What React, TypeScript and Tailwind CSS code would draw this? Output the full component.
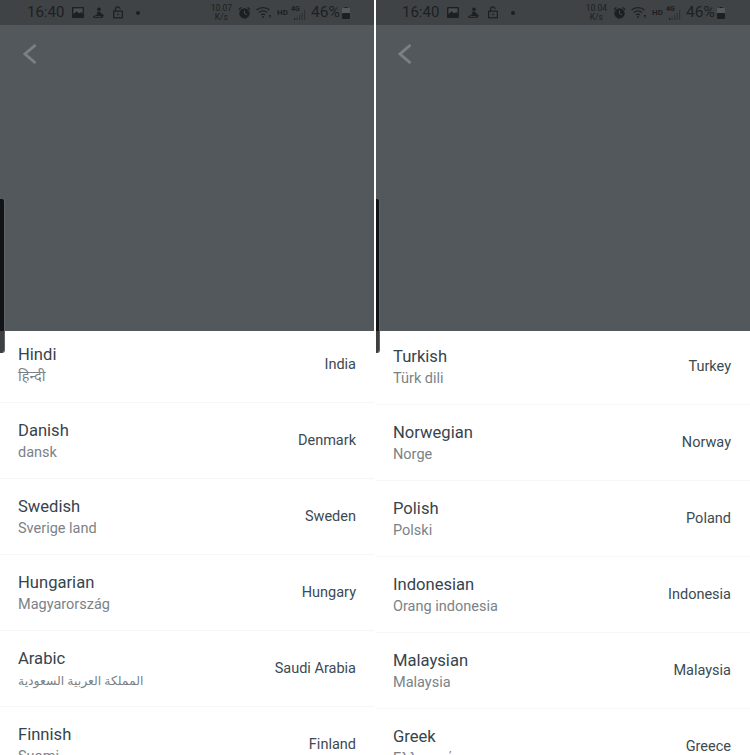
import React from 'react';

type Lang = { name: string; native: string; country: string; nativeClass?: string };

const leftLangs: Lang[] = [
  { name: 'Hindi', native: 'हिन्दी', country: 'India' },
  { name: 'Danish', native: 'dansk', country: 'Denmark' },
  { name: 'Swedish', native: 'Sverige land', country: 'Sweden' },
  { name: 'Hungarian', native: 'Magyarország', country: 'Hungary' },
  { name: 'Arabic', native: 'المملكة العربية السعودية', country: 'Saudi Arabia', nativeClass: 'text-[12.4px]' },
  { name: 'Finnish', native: 'Suomi', country: 'Finland' },
];

const rightLangs: Lang[] = [
  { name: 'Turkish', native: 'Türk dili', country: 'Turkey' },
  { name: 'Norwegian', native: 'Norge', country: 'Norway' },
  { name: 'Polish', native: 'Polski', country: 'Poland' },
  { name: 'Indonesian', native: 'Orang indonesia', country: 'Indonesia' },
  { name: 'Malaysian', native: 'Malaysia', country: 'Malaysia' },
  { name: 'Greek', native: 'Ελληνικά', country: 'Greece' },
];

const StatusBar = ({ speed, className }: { speed: string; className: string }) => (
  <div className={`h-[25px] shrink-0 bg-[#3f4346] flex items-center text-[#1d2022] ${className}`}>
    <span className="text-[15px] leading-none w-[45px]">16:40</span>
    <svg className="w-[12px] h-[11px]" viewBox="0 0 13 12">
      <rect x="0" y="0" width="13" height="12" rx="1" fill="#1d2022" />
      <rect x="1.5" y="1.5" width="10" height="6" fill="#4a4e51" />
      <path d="M1.5 8 L5 4.5 L8 7 L10 5.5 L11.5 7 V9 H1.5 Z" fill="#1d2022" />
    </svg>
    <svg className="w-[11px] h-[12px] ml-[9px]" viewBox="0 0 12 13" fill="#1d2022">
      <circle cx="6.5" cy="2.5" r="2" />
      <path d="M4 5 L8 5 L9 7 L12 9 L10 12 L1 12 L0 10 L3 9 L5 7 Z" />
      <path d="M2 10.5 H9" stroke="#4a4e51" strokeWidth="0.8" />
    </svg>
    <svg className="w-[10px] h-[13px] ml-[9px]" viewBox="0 0 11 13" fill="none" stroke="#1d2022" strokeWidth="1.3">
      <rect x="0.7" y="5" width="9.6" height="7.3" />
      <path d="M2.8 5 V3 A2.5 2.5 0 0 1 7.8 2.6" />
      <circle cx="5.5" cy="8.6" r="0.9" fill="#1d2022" stroke="none" />
    </svg>
    <span className="w-[4px] h-[4px] rounded-full bg-[#1d2022] ml-[13px]" />
    <div className="ml-auto flex items-center">
      <div className="flex flex-col items-center text-[8.5px] leading-[9px] mr-[6px]">
        <span>{speed}</span>
        <span>K/s</span>
      </div>
      <svg className="w-[13px] h-[13px]" viewBox="0 0 14 14" fill="#1d2022">
        <circle cx="7" cy="8" r="5.6" />
        <path d="M7 5 V8 L9.5 9.5" stroke="#4a4e51" strokeWidth="1" fill="none" />
        <path d="M0.5 3.5 L3 1 L4 2 L1.5 4.5 Z M13.5 3.5 L11 1 L10 2 L12.5 4.5 Z" />
      </svg>
      <svg className="w-[16px] h-[13px] ml-[5px]" viewBox="0 0 16 13" fill="none" stroke="#1d2022" strokeWidth="1.2">
        <path d="M0.5 4 A10 10 0 0 1 13.5 4" />
        <path d="M2.8 6.4 A7 7 0 0 1 11.2 6.4" />
        <path d="M5 8.8 A4 4 0 0 1 9 8.8" />
        <circle cx="7" cy="11" r="0.9" fill="#1d2022" stroke="none" />
        <path d="M14 9 V12 M12.8 10.2 L14 9 L15.2 10.2" strokeWidth="0.9" />
      </svg>
      <span className="text-[8px] font-bold leading-none ml-[5px] w-[11px]">HD</span>
      <div className="relative w-[15px] h-[14px] ml-[3px]">
        <span className="absolute left-0 top-0 text-[7px] font-bold leading-none">4G</span>
        <svg className="absolute right-0 bottom-0 w-[15px] h-[10px]" viewBox="0 0 15 10" fill="#2e3235">
          <rect x="3" y="8" width="1.2" height="2" fill="#1d2022" />
          <rect x="5.5" y="7" width="1.2" height="3" />
          <rect x="8" y="5" width="1.2" height="5" />
          <rect x="10.5" y="3" width="1.2" height="7" />
          <rect x="13" y="0" width="1.2" height="10" />
        </svg>
      </div>
      <span className="text-[15.5px] leading-none ml-[5px] w-[29px]">46%</span>
      <svg className="w-[8px] h-[12px] ml-[2px]" viewBox="0 0 8 12">
        <rect x="2.5" y="0" width="3" height="1" fill="#1d2022" />
        <rect x="0" y="1" width="8" height="11" rx="0.8" fill="#55595c" />
        <rect x="0" y="6" width="8" height="6" rx="0.8" fill="#1d2022" />
      </svg>
    </div>
  </div>
);

const Row = ({ lang, className }: { lang: Lang; className: string }) => (
  <div className={`shrink-0 flex items-center justify-between border-b border-[#f5f6f6] ${className}`}>
    <div className="flex flex-col pt-[2px]">
      <span className="text-[16.6px] leading-[22px] text-[#36444d]">{lang.name}</span>
      <span className={`leading-[21px] text-[#7b8287] ${lang.nativeClass ?? 'text-[14.5px]'}`}>{lang.native}</span>
    </div>
    <span className="text-[14.5px] text-[#3c4a52]">{lang.country}</span>
  </div>
);

const Pane = ({
  langs,
  speed,
  firstRow,
  rowPad,
  barPad,
  backPad,
}: {
  langs: Lang[];
  speed: string;
  firstRow: string;
  rowPad: string;
  barPad: string;
  backPad: string;
}) => (
  <div className="flex-1 min-w-0 h-full flex flex-col overflow-hidden bg-white">
    <StatusBar speed={speed} className={barPad} />
    <div className={`h-[306px] shrink-0 bg-[#53585c] pt-[19px] ${backPad}`}>
      <svg className="w-[14px] h-[20px]" viewBox="0 0 14 20" fill="none" stroke="#7c8083" strokeWidth="2.8">
        <path d="M12.5 1 L2 10 L12.5 19" />
      </svg>
    </div>
    {langs.map((lang, i) => (
      <Row key={lang.name} lang={lang} className={`${rowPad} ${i === 0 ? firstRow : 'h-[76px]'}`} />
    ))}
  </div>
);

// the side handle is black over the dim layer and goes grey past it
const Handle = ({ className }: { className: string }) => (
  <div className={`absolute top-[199px] h-[154px] flex flex-col overflow-hidden rounded-r-[3px] border-r border-[#5f6366] ${className}`}>
    <div className="flex-1 bg-[#111314]" />
    <div className="h-[22px] bg-[#3d3f41]" />
  </div>
);

const App = () => (
  <div className="relative w-[750px] h-[755px] overflow-hidden flex bg-white font-['Roboto','Noto_Sans','DejaVu_Sans',sans-serif]">
    <Pane
      langs={leftLangs}
      speed="10.07"
      firstRow="h-[72px] pb-[4px]"
      rowPad="pl-[18px] pr-[18px]"
      barPad="pl-[27px] pr-[24px]"
      backPad="pl-[23px]"
    />
    <div className="w-[2px] shrink-0 bg-white" />
    <Pane
      langs={rightLangs}
      speed="10.04"
      firstRow="h-[74px] pb-[2px]"
      rowPad="pl-[17px] pr-[19px]"
      barPad="pl-[26px] pr-[25px]"
      backPad="pl-[22px]"
    />
    <Handle className="left-0 w-[5px]" />
    <Handle className="left-[376px] w-[4px]" />
  </div>
);

export default App;
